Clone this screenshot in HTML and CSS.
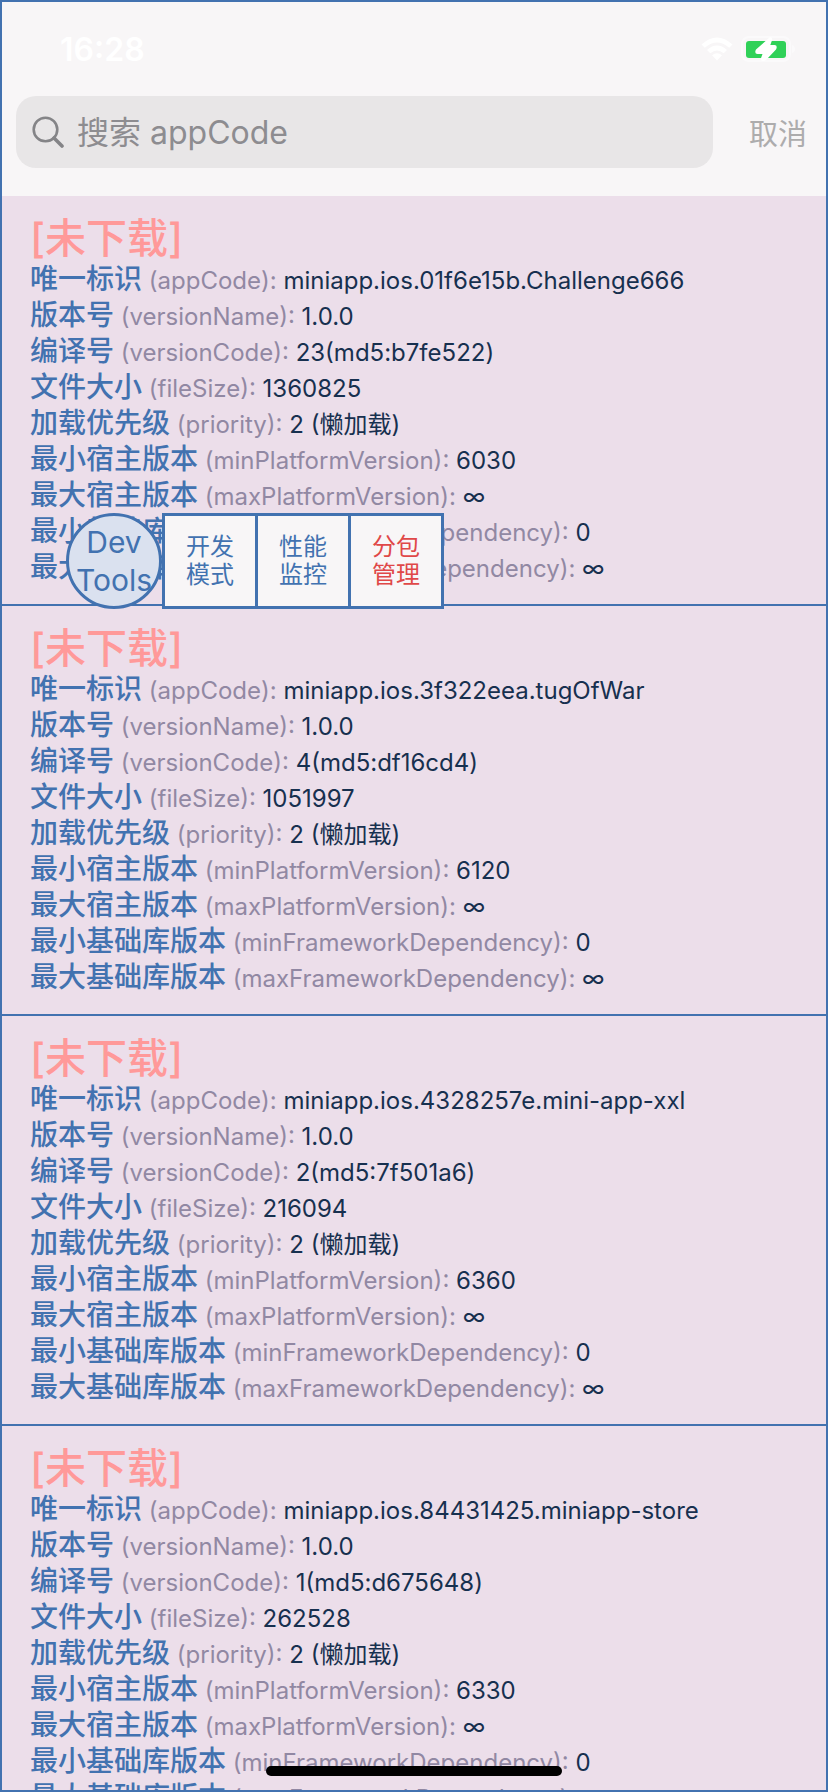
FILE: index.html
```
<!DOCTYPE html>
<html lang="zh-CN">
<head>
<meta charset="utf-8">
<meta name="viewport" content="width=device-width, initial-scale=1">
<title>分包管理</title>
<link rel="stylesheet" href="styles.css">
</head>
<body>
<div class="screen">
  <header class="header">
    <div class="status">
      <time class="clock">16:28</time>
      <div class="indicators">
        <svg class="wifi" viewBox="0 0 32 24" aria-hidden="true">
          <path d="M0.5 7.5 Q16 -6.500 31.500 7.500 L28.200 10.800 Q16 0 3.800 10.800 Z" fill="#fff"/>
          <path d="M6 13 Q16 4.200 26 13 L22.700 16.200 Q16 10.600 9.300 16.200 Z" fill="#fff"/>
          <path d="M11 18.300 Q16 14.200 21 18.300 L16 23.500 Z" fill="#fff"/>
        </svg>
        <svg class="battery" viewBox="0 0 54 26" aria-hidden="true">
          <rect x="1" y="1" width="48" height="24" rx="7" fill="none" stroke="#fbfafb" stroke-width="2"/>
          <path d="M51 9 Q54 10 54 13 Q54 16 51 17 Z" fill="#fbfafb"/>
          <rect x="5" y="5" width="40" height="17" rx="3" fill="#30d158"/>
          <path d="M28.500 1.500 L15 13.500 Q13 17.500 16.500 18 L21.500 18 L19.500 23.500 Q22 26.500 25.500 23.500 L35 13.500 Q37 9.300 33.500 9 L29.300 9 L31.300 3.500 Q31 0.500 28.500 1.500 Z" fill="#fff"/>
        </svg>
      </div>
    </div>
    <form class="search" role="search">
      <label class="field">
        <svg class="lens" viewBox="0 0 32 32" fill="none" stroke="#848487" aria-hidden="true">
          <circle cx="13.500" cy="13.500" r="11.800" stroke-width="2.600"/>
          <path d="M22 22 L30 30" stroke-width="3.600" stroke-linecap="round"/>
        </svg>
        <input class="query" type="text" placeholder="搜索 appCode" aria-label="搜索 appCode">
      </label>
      <button class="cancel" type="button">取消</button>
    </form>
  </header>

  <main class="list">
    <article class="item">
      <h2 class="state">[未下载]</h2>
      <p class="row"><b class="name">唯一标识</b> <span class="key">(appCode):</span> miniapp.ios.01f6e15b.Challenge666</p>
      <p class="row"><b class="name">版本号</b> <span class="key">(versionName):</span> 1.0.0</p>
      <p class="row"><b class="name">编译号</b> <span class="key">(versionCode):</span> 23(md5:b7fe522)</p>
      <p class="row"><b class="name">文件大小</b> <span class="key">(fileSize):</span> 1360825</p>
      <p class="row"><b class="name">加载优先级</b> <span class="key">(priority):</span> 2 (懒加载)</p>
      <p class="row"><b class="name">最小宿主版本</b> <span class="key">(minPlatformVersion):</span> 6030</p>
      <p class="row"><b class="name">最大宿主版本</b> <span class="key">(maxPlatformVersion):</span> ∞</p>
      <p class="row"><b class="name">最小基础库版本</b> <span class="key">(minFrameworkDependency):</span> 0</p>
      <p class="row"><b class="name">最大基础库版本</b> <span class="key">(maxFrameworkDependency):</span> ∞</p>
    </article>
    <article class="item">
      <h2 class="state">[未下载]</h2>
      <p class="row"><b class="name">唯一标识</b> <span class="key">(appCode):</span> miniapp.ios.3f322eea.tugOfWar</p>
      <p class="row"><b class="name">版本号</b> <span class="key">(versionName):</span> 1.0.0</p>
      <p class="row"><b class="name">编译号</b> <span class="key">(versionCode):</span> 4(md5:df16cd4)</p>
      <p class="row"><b class="name">文件大小</b> <span class="key">(fileSize):</span> 1051997</p>
      <p class="row"><b class="name">加载优先级</b> <span class="key">(priority):</span> 2 (懒加载)</p>
      <p class="row"><b class="name">最小宿主版本</b> <span class="key">(minPlatformVersion):</span> 6120</p>
      <p class="row"><b class="name">最大宿主版本</b> <span class="key">(maxPlatformVersion):</span> ∞</p>
      <p class="row"><b class="name">最小基础库版本</b> <span class="key">(minFrameworkDependency):</span> 0</p>
      <p class="row"><b class="name">最大基础库版本</b> <span class="key">(maxFrameworkDependency):</span> ∞</p>
    </article>
    <article class="item">
      <h2 class="state">[未下载]</h2>
      <p class="row"><b class="name">唯一标识</b> <span class="key">(appCode):</span> miniapp.ios.4328257e.mini-app-xxl</p>
      <p class="row"><b class="name">版本号</b> <span class="key">(versionName):</span> 1.0.0</p>
      <p class="row"><b class="name">编译号</b> <span class="key">(versionCode):</span> 2(md5:7f501a6)</p>
      <p class="row"><b class="name">文件大小</b> <span class="key">(fileSize):</span> 216094</p>
      <p class="row"><b class="name">加载优先级</b> <span class="key">(priority):</span> 2 (懒加载)</p>
      <p class="row"><b class="name">最小宿主版本</b> <span class="key">(minPlatformVersion):</span> 6360</p>
      <p class="row"><b class="name">最大宿主版本</b> <span class="key">(maxPlatformVersion):</span> ∞</p>
      <p class="row"><b class="name">最小基础库版本</b> <span class="key">(minFrameworkDependency):</span> 0</p>
      <p class="row"><b class="name">最大基础库版本</b> <span class="key">(maxFrameworkDependency):</span> ∞</p>
    </article>
    <article class="item">
      <h2 class="state">[未下载]</h2>
      <p class="row"><b class="name">唯一标识</b> <span class="key">(appCode):</span> miniapp.ios.84431425.miniapp-store</p>
      <p class="row"><b class="name">版本号</b> <span class="key">(versionName):</span> 1.0.0</p>
      <p class="row"><b class="name">编译号</b> <span class="key">(versionCode):</span> 1(md5:d675648)</p>
      <p class="row"><b class="name">文件大小</b> <span class="key">(fileSize):</span> 262528</p>
      <p class="row"><b class="name">加载优先级</b> <span class="key">(priority):</span> 2 (懒加载)</p>
      <p class="row"><b class="name">最小宿主版本</b> <span class="key">(minPlatformVersion):</span> 6330</p>
      <p class="row"><b class="name">最大宿主版本</b> <span class="key">(maxPlatformVersion):</span> ∞</p>
      <p class="row"><b class="name">最小基础库版本</b> <span class="key">(minFrameworkDependency):</span> 0</p>
      <p class="row"><b class="name">最大基础库版本</b> <span class="key">(maxFrameworkDependency):</span> ∞</p>
    </article>
  </main>

  <div class="devtools">
    <button class="ball" type="button">Dev<br>Tools</button>
    <div class="menu">
      <button class="tool" type="button">开发<br>模式</button>
      <button class="tool" type="button">性能<br>监控</button>
      <button class="tool current" type="button">分包<br>管理</button>
    </div>
  </div>
  <div class="home-bar"></div>
</div>
</body>
</html>
```

FILE: styles.css
```
* {
  box-sizing: border-box;
}

body {
  margin: 0;
  font-family: Inter, "Noto Sans CJK SC", sans-serif;
  color: #17304f;
}

button,
input {
  margin: 0;
  padding: 0;
  border: 0;
  background: none;
  font: inherit;
}

.screen {
  position: relative;
  display: flex;
  flex-direction: column;
  height: 100vh;
  overflow: hidden;
  border: 2px solid #4272b0;
  background: #ecdeea;
}

.header {
  flex: none;
  padding-bottom: 28px;
  background: #f8f6f7;
}

.status {
  display: flex;
  align-items: center;
  justify-content: space-between;
  height: 94px;
  padding: 0 31px 0 58px;
  color: #fff;
}

.clock {
  font-size: 32px;
  font-weight: 600;
}

.indicators {
  display: flex;
  align-items: center;
  gap: 8px;
}

.wifi {
  width: 32px;
  height: 24px;
}

.battery {
  width: 54px;
  height: 26px;
}

.search {
  display: flex;
  align-items: center;
  gap: 36px;
  padding: 0 19px 0 14px;
}

.field {
  flex: 1;
  display: flex;
  align-items: center;
  gap: 13px;
  height: 72px;
  padding: 0 16px;
  border-radius: 20px;
  background: #e8e6e7;
}

.lens {
  flex: none;
  width: 32px;
  height: 32px;
}

.query {
  flex: 1;
  min-width: 0;
  height: 72px;
  outline: 0;
  font-size: 32px;
  color: #17304f;
}

.query::placeholder {
  color: #8d8c90;
  opacity: 1;
}

.cancel {
  font-size: 29px;
  color: #adacad;
}

.list {
  flex: 1;
  min-height: 0;
  overflow: hidden;
}

.item {
  padding: 19px 28px;
  border-bottom: 2px solid #4272b0;
}

.state {
  margin: 0;
  font-size: 41px;
  font-weight: 500;
  line-height: 46px;
  color: #ff9999;
}

.row {
  height: 36px;
  margin: 0;
  font-size: 24px;
  line-height: 36px;
  white-space: nowrap;
}

.name {
  font-size: 28px;
  font-weight: 500;
  color: #4272b0;
}

.key {
  color: #9188a3;
}

/* Floating debug launcher above the list */
.devtools {
  position: absolute;
  top: 511px;
  left: 64px;
  display: flex;
}

.ball {
  width: 96px;
  height: 96px;
  border: 3px solid #4272b0;
  border-radius: 50%;
  background: #dae1ef;
  font-size: 30px;
  line-height: 38px;
  color: #4272b0;
}

.menu {
  display: flex;
  border: 3px solid #4272b0;
  background: #f8f6f7;
}

.tool {
  width: 90px;
  font-size: 24px;
  line-height: 28px;
  color: #4272b0;
}

.tool + .tool {
  width: 93px;
  border-left: 3px solid #4272b0;
}

.tool.current {
  color: #e04848;
}

.home-bar {
  position: absolute;
  bottom: 14px;
  left: 50%;
  width: 296px;
  height: 10px;
  margin-left: -148px;
  border-radius: 5px;
  background: #000;
}
```
